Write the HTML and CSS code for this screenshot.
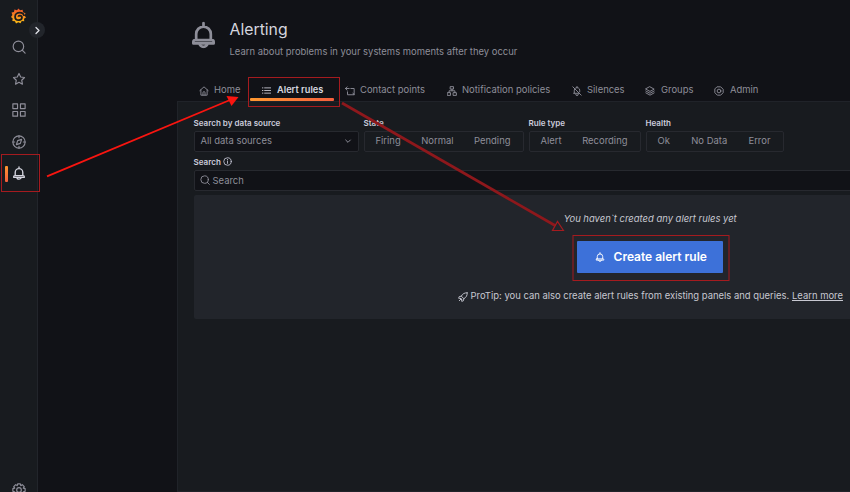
FILE: index.html
```html
<!DOCTYPE html>
<html lang="en">
<head>
<meta charset="utf-8">
<title>Alerting</title>
<link rel="stylesheet" href="styles.css">
</head>
<body>
<svg class="defs" aria-hidden="true">
  <defs>
    <linearGradient id="flame" x1="0" y1="1" x2="0" y2="0"><stop offset="0" stop-color="#fcc014"/><stop offset="1" stop-color="#f0532a"/></linearGradient>
    <symbol id="bell" viewBox="0 0 24 24"><path d="M12 1.500v3M5.500 16.500V11a6.500 6.500 0 0 1 13 0v5.500M4.500 16.500h15a1.500 1.500 0 0 1 1.500 1.500v1.500H3V18a1.500 1.500 0 0 1 1.500-1.500zM8.500 19.500a3.500 3 0 0 0 7 0"/></symbol>
    <symbol id="search" viewBox="0 0 24 24"><circle cx="11" cy="11" r="9"/><path d="M17.500 17.500l5 5"/></symbol>
    <symbol id="down" viewBox="0 0 24 24"><path d="M5 9l7 7 7-7"/></symbol>
  </defs>
</svg>
<div class="app">
  <nav class="sidebar">
    <svg class="logo" viewBox="0 0 24 24"><path fill="url(#flame)" d="M12 0l2.600 2.900 4-.9.600 4 4 1.400-1.600 3.600 2.400 3.300-3.200 2 .4 4-4-.2-2 3.600-3.500-1.900L8 24l-1.700-3.500-4.200-.4.600-4L0 13.400l2.200-3L.8 6.500l4-1 .7-4 4 1.200z"/><path class="swirl" d="M21 12c-.5-3.500-3.500-5.500-7-5.500-4 0-7.500 2.700-7.500 6.500 0 3.400 2.700 5.500 6 5.500 3 0 5-1.800 5-4 0-2-1.700-3.200-3.300-3.200-1.500 0-2.400 .8-2.400 2"/></svg>
    <svg class="icon side" viewBox="0 0 24 24"><use href="#search"/></svg>
    <svg class="icon side" viewBox="0 0 24 24"><path d="M12 2.500l2.900 6.100 6.600.9-4.800 4.700 1.200 6.700L12 17.700l-5.900 3.200 1.200-6.700L2.500 9.500l6.600-.9z"/></svg>
    <svg class="icon side" viewBox="0 0 24 24"><path d="M1.500 1.500h8v8h-8zM14.500 1.500h8v8h-8zM1.500 14.500h8v8h-8zM14.500 14.500h8v8h-8z"/></svg>
    <svg class="icon side" viewBox="0 0 24 24"><circle cx="12" cy="12" r="10.500"/><path d="M16.500 7.500l-2.200 6.800-6.800 2.200 2.200-6.800zM12 1.500v3M12 19.500v3M1.500 12h3M19.500 12h3"/></svg>
    <div class="current"><svg class="icon side" viewBox="0 0 24 24"><use href="#bell"/></svg></div>
    <svg class="icon side gear" viewBox="0 0 24 24"><path d="M9.700 1.500h4.600l.7 3 2.700-1.600 3.300 3.300-1.600 2.600 3.100.8v4.700l-3.100.8 1.600 2.600-3.300 3.300-2.700-1.600-.7 3.100H9.700l-.8-3.100L6.300 21 3 17.700l1.600-2.600-3.100-.8V9.600l3.100-.8L3 6.200l3.300-3.300 2.600 1.600z"/><circle cx="12" cy="12" r="4"/></svg>
    <span class="expand"><svg class="icon" viewBox="0 0 24 24"><path d="M8 4l8 8-8 8"/></svg></span>
  </nav>
  <main class="page">
    <header class="head">
      <svg class="icon hero" viewBox="0 0 24 24"><use href="#bell"/></svg>
      <div><h1>Alerting</h1><p class="sub">Learn about problems in your systems moments after they occur</p></div>
    </header>
    <div class="tabs">
      <a class="tab home"><svg class="icon" viewBox="0 0 24 24"><path d="M2 11L12 2l10 9M4.500 9.500V22h15V9.500M9.500 22v-6a2.500 2.500 0 0 1 5 0v6"/></svg><span>Home</span></a>
      <a class="tab rules"><svg class="icon" viewBox="0 0 24 24"><path d="M7 5H23M7 12H23M7 19H23M1 5h1.500M1 12h1.500M1 19h1.500"/></svg><span>Alert rules</span></a>
      <a class="tab contact"><svg class="icon" viewBox="0 0 24 24"><path d="M5 2L1 6l4 4M1 6h9M14 6h8v15H6v-7M19 17l3 4"/></svg><span>Contact points</span></a>
      <a class="tab policies"><svg class="icon" viewBox="0 0 24 24"><path d="M8.500 1.500h7v6h-7zM1.500 16h7v6.500h-7zM15.500 16h7v6.500h-7zM12 7.500v4M5 16v-4.500h14V16"/></svg><span>Notification policies</span></a>
      <a class="tab silences"><svg class="icon" viewBox="0 0 24 24"><path d="M2 2l20 20M5.500 17v-7L7 6.500M9 4.500c5-2 9.500 1 9.500 5.500v4M4 17.500h13M9 20a3 3 0 0 0 6 0M12 1v3"/></svg><span>Silences</span></a>
      <a class="tab groups"><svg class="icon" viewBox="0 0 24 24"><path d="M12 2l10 5.500-10 5.500L2 7.500zM2 12l10 5.500L22 12M2 16.500L12 22l10-5.500"/></svg><span>Groups</span></a>
      <a class="tab admin"><svg class="icon" viewBox="0 0 24 24"><path d="M8 2h8l6 6v8l-6 6H8l-6-6V8z"/><circle cx="12" cy="12" r="4.500"/></svg><span>Admin</span></a>
    </div>
    <section class="panel">
      <div class="filters">
        <div class="field source"><label>Search by data source</label><div class="box select"><span>All data sources</span><svg class="icon" viewBox="0 0 24 24"><use href="#down"/></svg></div></div>
        <div class="field state"><label>State</label><div class="box radio"><span>Firing</span><span>Normal</span><span>Pending</span></div></div>
        <div class="field type"><label>Rule type</label><div class="box radio"><span>Alert</span><span>Recording</span></div></div>
        <div class="field health"><label>Health</label><div class="box radio"><span>Ok</span><span>No Data</span><span>Error</span></div></div>
      </div>
      <div class="field query">
        <label>Search <svg class="icon" viewBox="0 0 24 24"><circle cx="12" cy="12" r="10"/><path d="M12 11v6M12 6.500v1"/></svg></label>
        <div class="box input"><svg class="icon" viewBox="0 0 24 24"><use href="#search"/></svg><span>Search</span></div>
      </div>
      <div class="empty">
        <p class="none"><span>You haven`t created any alert rules yet</span></p>
        <button class="create"><svg class="icon" viewBox="0 0 24 24"><use href="#bell"/></svg><span>Create alert rule</span></button>
        <p class="tip"><svg class="icon" viewBox="0 0 24 24"><path d="M22 2c-6-.5-11 2-14 8l6 6c6-3 8.500-8 8-14zM8 10l-5 1-1.500 4 5 .5M14 16l-1 5-4 1.500-.5-5M6 15l3 3M3 21l4-4"/></svg><span>ProTip: you can also create alert rules from existing panels and queries. <a>Learn more</a></span></p>
      </div>
    </section>
  </main>
</div>
<svg class="marks" viewBox="0 0 850 492">
  <g class="frames"><rect x="1.500" y="154.500" width="38" height="37"/><rect x="248.500" y="77.500" width="91" height="29"/><rect x="573" y="235.500" width="156" height="45"/></g>
  <path class="line-a" d="M47 176.300L230 100"/><path class="head-a" d="M238.500 97l-12-1 5 10z"/>
  <path class="line-b" d="M342 103L555 225.500"/><path class="head-b" d="M563.500 230.500l-6-9-5 9z"/>
</svg>
</body>
</html>
```

FILE: styles.css
```css
* { box-sizing: border-box; }
html { overflow: hidden; }
body { margin: 0; width: 850px; height: 492px; overflow: hidden; background: #111217; color: #c7c8d1; font: 9.450px/14px Inter, sans-serif; }
h1, p { margin: 0; font-weight: 400; }
.defs { position: absolute; width: 0; height: 0; }
.icon { fill: none; stroke: currentColor; stroke-width: 2.200; stroke-linejoin: round; stroke-linecap: round; flex: none; }
.app { display: flex; width: 1124px; height: 492px; }

.sidebar { position: relative; flex: none; width: 38px; height: 492px; background: #181b1f; border-right: 1px solid #22252b; display: flex; flex-direction: column; align-items: center; padding-top: 8px; color: #8e8e99; }
.logo { width: 15px; height: 16px; flex: none; margin-bottom: 16px; }
.swirl { fill: none; stroke: #181b1f; stroke-width: 2.800; }
.side { width: 14px; height: 14px; margin-bottom: 17.500px; stroke-width: 2; }
.current { position: relative; width: 37px; height: 18px; display: flex; justify-content: center; align-items: center; color: #d5d5df; }
.current .side { margin: 0; stroke-width: 2.300; }
.current::before { content: ""; position: absolute; left: 5px; top: 0; width: 3px; height: 16px; border-radius: 1px; background: linear-gradient(#ff9830, #f55f3e); }
.gear { margin: 303px 0 0; }
.expand { position: absolute; left: 29px; top: 22px; width: 16px; height: 16px; border-radius: 50%; background: #22252b; display: flex; align-items: center; justify-content: center; color: #e0e0e8; }
.expand .icon { width: 9px; height: 9px; stroke-width: 3.500; }

.page { flex: 1; padding-left: 139px; }
.head { height: 78px; display: flex; padding: 20px 0 0 13px; gap: 12.500px; }
.hero { width: 27px; height: 28px; margin-top: 1px; color: #8e8e99; stroke-width: 2.400; }
h1 { font-size: 15.800px; line-height: 20px; color: #d5d5df; }
.sub { margin-top: 5px; color: #8e8e99; }
.tabs { display: flex; height: 23px; padding-left: 11px; color: #8e8e99; }
.tab { display: flex; align-items: center; gap: 5px; padding-left: 11px; white-space: nowrap; }
.tab .icon { width: 10px; height: 10px; margin-top: 2px; }
.home { width: 62px; }
.rules { position: relative; width: 84px; gap: 6px; color: #d5d5df; font-weight: 600; font-size: 9.250px; }
.rules .icon { width: 9px; height: 9px; margin-left: 1px; }
.rules::after { content: ""; position: absolute; left: 0; right: 0; bottom: 0; height: 3px; border-radius: 1px; background: linear-gradient(90deg, #ff9830, #f55f3e); }
.contact { width: 102px; }
.policies { width: 125px; }
.silences { width: 73px; }
.groups { width: 69px; }
.groups, .admin { gap: 6px; }

.panel { height: 391px; background: #181b1f; border: 1px solid #202329; padding: 15px 16px 0 15.500px; }
.filters { display: flex; gap: 5px; }
label { display: flex; align-items: center; height: 12px; margin-bottom: 2px; gap: 2px; font-size: 8.050px; font-weight: 600; color: #ccccdc; white-space: nowrap; }
label .icon { width: 9px; height: 9px; margin-bottom: 1px; }
.box { display: flex; align-items: center; height: 21px; padding-bottom: 1px; border: 1px solid #27292f; border-radius: 2px; color: #8e8e99; }
.select { width: 165px; justify-content: space-between; padding: 0 6px 1px; background: #111217; }
.select .icon { width: 8px; height: 8px; stroke-width: 3; }
.radio { padding: 0 12px 1px 11px; justify-content: space-between; }
.state { width: 160px; }
.type { width: 112px; }
.health { width: 138px; }
.query { margin-top: 4px; }
.input { gap: 3px; padding-left: 5px; padding-bottom: 0; background: #111217; }
.input .icon { width: 10px; height: 10px; margin-bottom: 1px; }
.empty { margin-top: 4px; height: 124px; background: #22252b; border-radius: 2px; display: flex; flex-direction: column; align-items: center; padding-top: 17px; }
.none { font-style: italic; }
.create { width: 146px; height: 32px; margin: 15px 0 16px; border: 0; border-radius: 1px; background: #3d71d9; color: #fff; font: 600 12px/18px Inter, sans-serif; display: flex; align-items: center; justify-content: center; gap: 9px; padding: 0 0 0 1px; }
.create .icon { width: 10px; height: 10px; stroke-width: 2.200; }
.tip { display: flex; align-items: center; gap: 3px; white-space: nowrap; }
.tip .icon { width: 10px; height: 10px; margin-top: 1px; }
.tip a { text-decoration: underline; }

.marks { position: absolute; left: 0; top: 0; width: 850px; height: 492px; fill: none; }
.frames { stroke: #a51b1f; stroke-width: 1; }
.line-a { stroke: #f91510; stroke-width: 1.800; }
.head-a { fill: #f91510; }
.line-b { stroke: #8e181c; stroke-width: 2.700; }
.head-b { stroke: #a51b1f; stroke-width: 1.200; }
```
